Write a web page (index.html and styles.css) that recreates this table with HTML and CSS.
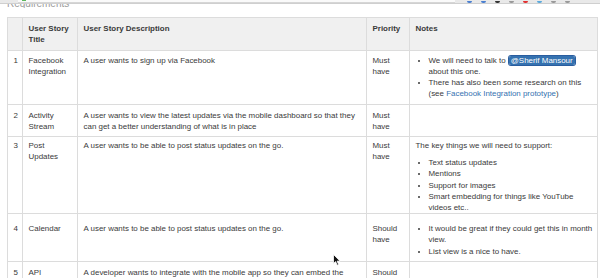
FILE: index.html
```html
<!DOCTYPE html>
<html lang="en">
<head>
    <meta charset="UTF-8">
    <title>Requirements</title>
    <link rel="stylesheet" href="styles.css">
</head>
<body>

    <div class="chrome">
        <div class="address"><span class="lock"></span></div>
        <div class="tools">
            <span class="ic blue"></span>
            <span class="ic blue"></span>
            <span class="ic dark"></span>
            <span class="ic gray"></span>
            <span class="ic red"></span>
            <span class="ic sky"></span>
            <span class="ic gray"></span>
            <span class="ic gray"></span>
        </div>
    </div>

    <div class="title-clip"><h2>Requirements</h2></div>

    <table class="req">
        <colgroup>
            <col class="c-num"><col class="c-title"><col class="c-desc"><col class="c-prio"><col class="c-notes">
        </colgroup>
        <thead>
            <tr>
                <th></th>
                <th>User Story Title</th>
                <th>User Story Description</th>
                <th>Priority</th>
                <th>Notes</th>
            </tr>
        </thead>
        <tbody>
            <tr>
                <td>1</td>
                <td>Facebook Integration</td>
                <td>A user wants to sign up via Facebook</td>
                <td>Must have</td>
                <td>
                    <ul class="flush">
                        <li>We will need to talk to <span class="mention">@Sherif Mansour</span> about this one.</li>
                        <li>There has also been some research on this (see <a href="#">Facebook Integration prototype</a>)</li>
                    </ul>
                </td>
            </tr>
            <tr>
                <td>2</td>
                <td>Activity Stream</td>
                <td>A user wants to view the latest updates via the mobile dashboard so that they can get a better understanding of what is in place</td>
                <td>Must have</td>
                <td></td>
            </tr>
            <tr class="tight">
                <td>3</td>
                <td>Post Updates</td>
                <td>A user wants to be able to post status updates on the go.</td>
                <td>Must have</td>
                <td>
                    <p>The key things we will need to support:</p>
                    <ul>
                        <li>Text status updates</li>
                        <li>Mentions</li>
                        <li>Support for images</li>
                        <li>Smart embedding for things like YouTube videos etc..</li>
                    </ul>
                </td>
            </tr>
            <tr class="loose">
                <td>4</td>
                <td>Calendar</td>
                <td>A user wants to be able to post status updates on the go.</td>
                <td>Should have</td>
                <td>
                    <ul class="flush">
                        <li>It would be great if they could get this in month view.</li>
                        <li>List view is a nice to have.</li>
                    </ul>
                </td>
            </tr>
            <tr>
                <td>5</td>
                <td>API</td>
                <td>A developer wants to integrate with the mobile app so they can embed the activity stream on their website.</td>
                <td>Should have</td>
                <td></td>
            </tr>
        </tbody>
    </table>

    <svg class="cursor" width="8" height="12" viewBox="0 0 8 12">
        <path d="M0.5 0.5 L0.5 9.5 L2.6 7.6 L4.2 11.2 L5.6 10.6 L4.1 7.1 L7 7.1 Z" fill="#111" stroke="#fff" stroke-width="0.8"/>
    </svg>

</body>
</html>
```

FILE: styles.css
```css
/* confluence page, zoomed out */
:root {
    --text: #3a3a3a; --line: #dcdcdc; --head: #f0f0f0;
    --link: #3572b0; --muted: #8a8a8a;
}
body { margin: 0; background: #fff; color: var(--text); font-family: "Liberation Sans", Arial, sans-serif; font-size: 7.95px; line-height: 11.1px; overflow: hidden; }

/* browser toolbar strip, only its bottom edge is in view */
.chrome { height: 3px; background: #e9e9e9; border-bottom: 1px solid #cfcfcf; display: flex; align-items: flex-end; }
.address { margin-left: 18px; width: 437px; height: 3px; background: #fafafa; border-bottom: 1px solid #d6d6d6; }
.lock { display: inline-block; width: 4px; height: 2px; margin-left: 4px; background: #5cb85c; vertical-align: top; }
.tools { display: flex; gap: 9px; margin-left: 12px; align-items: flex-end; }
.ic { width: 5px; height: 2px; border-radius: 0 0 2px 2px; }
.ic.blue { background: #4a7fd0; } .ic.dark { background: #333; } .ic.gray { background: #999; }
.ic.red { background: #e23030; } .ic.sky { background: #5aa9dc; }

.title-clip { height: 4px; overflow: hidden; display: flex; align-items: flex-end; margin-left: 7px; }
.title-clip h2 { margin: 0; font-size: 10px; line-height: 9px; font-weight: normal; color: #9a9a9a; }

.req { margin: 9px 0 0 7px; width: 590px; border-collapse: collapse; table-layout: fixed; }
.c-num { width: 15px; } .c-title { width: 55px; } .c-desc { width: 289px; } .c-prio { width: 43px; } .c-notes { width: 188px; }
.req th, .req td { border: 1px solid var(--line); padding: 4.5px 5px 4.5px 5.5px; vertical-align: top; text-align: left; }
.req td:nth-child(3) { padding-right: 10.5px; }
.req td:nth-child(5) { padding-right: 3px; }
.req th { background: var(--head); font-weight: bold; padding-top: 5px; padding-bottom: 4.5px; }
.req .tight td { padding-top: 3px; padding-bottom: 0; }
.req .loose td { padding-top: 9.5px; }

.req p { margin: 0; }
.req ul { margin: 6px 0 0; padding-left: 13px; }
.req ul.flush { margin-top: 0; }
.req a { color: var(--link); text-decoration: none; }
.mention { background: var(--link); color: #fff; padding: 0 2px; margin: 0 1px; border-radius: 2px; box-shadow: 0 0 0 1px #2a5d9f; }

.cursor { position: absolute; left: 333px; top: 254px; }
```
